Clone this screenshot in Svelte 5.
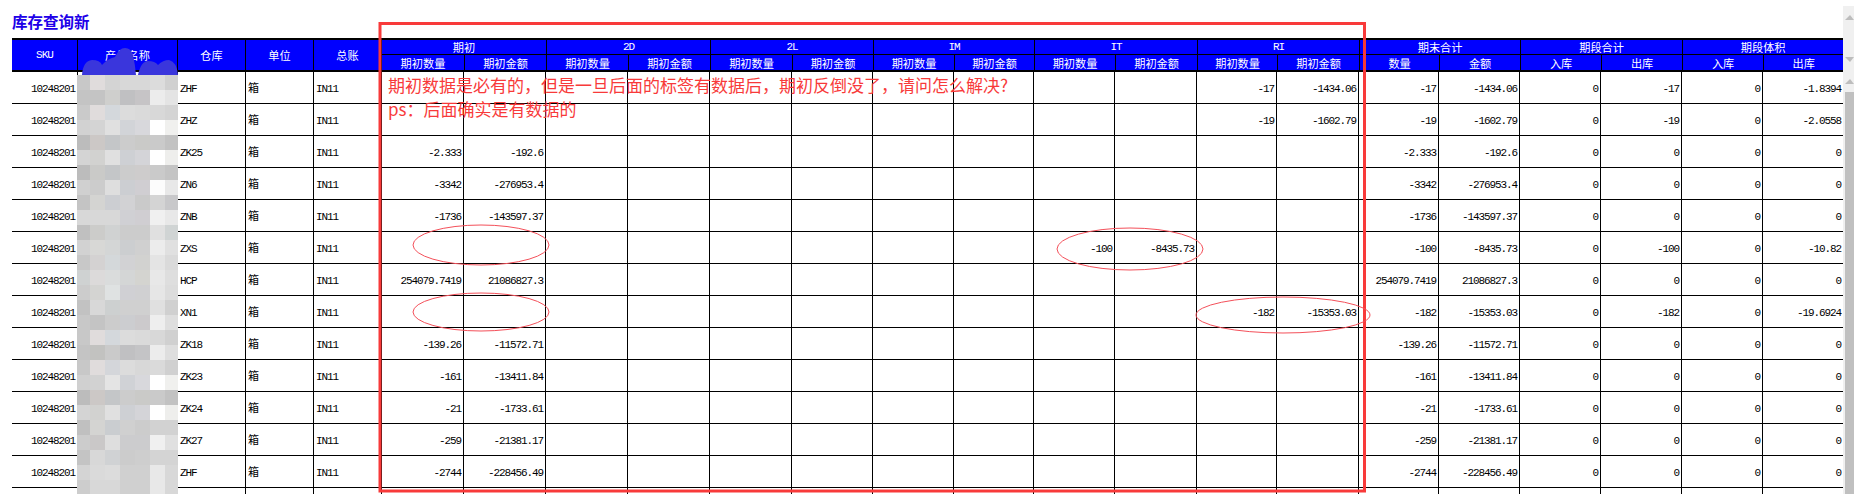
<script>
  // right edge of every column, measured off the body grid lines
  const edges = [12, 78, 178, 246, 314, 382, 464, 546, 628, 710, 792, 873, 954, 1034, 1115, 1197, 1277, 1359, 1439, 1520, 1601, 1682, 1763, 1843];
  const widths = edges.slice(1).map((e, i) => e - edges[i]);
  // the frozen header sits about a pixel to the right of the body from 期初 on
  const headWidths = widths.map((w, i) => (i === 5 ? w + 1 : i === 22 ? w - 1 : w));

  const groups = [
    { label: '期初', subs: ['期初数量', '期初金额'], latin: false },
    { label: '2D', subs: ['期初数量', '期初金额'], latin: true },
    { label: '2L', subs: ['期初数量', '期初金额'], latin: true },
    { label: 'IM', subs: ['期初数量', '期初金额'], latin: true },
    { label: 'IT', subs: ['期初数量', '期初金额'], latin: true },
    { label: 'RI', subs: ['期初数量', '期初金额'], latin: true },
    { label: '期末合计', subs: ['数量', '金额'], latin: false },
    { label: '期段合计', subs: ['入库', '出库'], latin: false },
    { label: '期段体积', subs: ['入库', '出库'], latin: false }
  ];

  function row(wh, slot, qty, amt, out = 0, vol = 0) {
    const cells = Array(12).fill('');
    if (qty !== '') {
      cells[slot * 2] = qty;
      cells[slot * 2 + 1] = amt;
    }
    return { wh, sku: '10248201', unit: '箱', acct: 'IN11', cells: [...cells, qty, amt, 0, out, 0, vol] };
  }

  const rows = [
    row('ZHF', 5, -17, '-1434.06', -17, -1.8394),
    row('ZHZ', 5, -19, '-1602.79', -19, -2.0558),
    row('ZK25', 0, -2.333, '-192.6'),
    row('ZN6', 0, -3342, '-276953.4'),
    row('ZNB', 0, -1736, '-143597.37'),
    row('ZXS', 4, -100, '-8435.73', -100, -10.82),
    row('HCP', 0, '254079.7419', '21086827.3'),
    row('XN1', 5, -182, '-15353.03', -182, -19.6924),
    row('ZK18', 0, -139.26, '-11572.71'),
    row('ZK23', 0, -161, '-13411.84'),
    row('ZK24', 0, -21, '-1733.61'),
    row('ZK27', 0, -259, '-21381.17'),
    row('ZHF', 0, -2744, '-228456.49'),
    // only the top of this row is on screen, its text falls below the fold
    { wh: '', sku: '', unit: '', acct: '', cells: Array(18).fill('') }
  ];

  // mosaic over the product names, one line per 15px band
  const mosaic = [
    'c8c8c8 e0dcdc d4d4d4 d8d8d8 d8d8d8 dcdcdc d0d0d0',
    'c4c4c4 c4c4c4 cfcfcd c0c0c2 c6c4c6 ececec e4e4e4',
    'cacaca e0dcdc d4d8dc dcdcdc dadada d8d8d8 d4d4d4',
    'd2d2d2 d4d4d4 e0e0e0 d2d4d8 d8d8dc ffffff f0f0ee',
    'bcbcbc ccc8c6 c4c6c8 cccccc cacac8 cacaca c2c2c2',
    'd4d4d4 d2d2d0 e0e0e0 ced0d4 d4d4d8 ffffff eeeeec',
    'bcbcbc cacac8 c4c6c8 cccccc cecccc cacaca c4c4c4',
    'd0d0d0 cccccc dedede ccced2 d0ced2 fcfcfc e8e8e8',
    'c4c4c4 d4d4d2 ccced2 d2d2d4 cacaca d4d4d4 c8c8ca',
    'd8d8d8 d8d8d8 d8d8d8 d0d0d4 d0ced2 f0f0f0 e8e8e8',
    'c0c0c0 ccccca d0d2d2 cccccc cccccc e0e0e0 d0d4d4',
    'd2d2d2 d8d8d6 d4d6d6 ccced0 d0d0d0 ececec e0e0e0',
    'c8c8c8 d4d2d2 d4d8da d2d2d4 d2d2d0 e4e4e4 dadada',
    'cfd2d2 dcdada dadcdc d4d6d6 d4d4d0 e8e8e8 dedede',
    'cccccc d4d4d2 dfe2e2 d0d0d4 d0d0d2 e6e6e6 dcdcdc',
    'c2c2c2 d8d8d8 cdd0d0 d0d0d0 d0d0d0 e0e0e0 d0d0d0',
    'c8c8c8 c4c4c4 cccccc cccdd0 cccacc eeeeee dedede',
    'c8c8c8 e0dcdc d4d8dc dcdcdc dadada d8d8d8 d0d0d0',
    'c4c4c4 c2c2c0 cacaca c0c0c2 c4c4c6 ececec dedede',
    'c8c8c8 e0dcdc d4d6da dcdcdc d8d8d8 dadada d0d0d0',
    'd0d0d0 d2d2d2 e4e4e4 d0d2d6 d8d8dc ffffff f0f0ee',
    'bcbcbc ccc8c6 c4c6c8 cccccc cacac8 cacaca c2c2c2',
    'd4d4d4 d2d2d0 e0e0e0 ced0d4 d4d4d8 ffffff eeeeec',
    'c0c0c0 d4d4d2 cacdd0 d0d0d0 cccccc d2d2d2 d2d2d2',
    'cccccc cac8c8 dedede ccccce ccccce f0f0f0 e0e0e0',
    'c4c4c4 d8d8d8 d0d2d4 cccccc cecece d4d4d4 d4d4d4',
    'd4d4d4 dadada dcdcdc d0d0d0 d0d0d0 e8e8e8 d8d8d8',
    'cdcdcd d8d8d8 d8d8d8 d0d0d0 d0d0d0 e8e8e8 d8d8d8'
  ].flatMap((line) => line.split(' '));

  const ellipses = [
    { cx: 481, cy: 245, rx: 68, ry: 20 },
    { cx: 481, cy: 312, rx: 68, ry: 19 },
    { cx: 1130, cy: 249, rx: 73, ry: 21 },
    { cx: 1283, cy: 315, rx: 87, ry: 18 }
  ];
</script>

<div class="page">
  <main class="main">
    <h1 class="title">库存查询新</h1>

    <table class="head">
      <colgroup>
        {#each headWidths as w}<col style="width: {w}px" />{/each}
      </colgroup>
      <thead>
        <tr class="top">
          <th rowspan="2" class="latin">SKU</th>
          <th rowspan="2">产品名称</th>
          <th rowspan="2">仓库</th>
          <th rowspan="2">单位</th>
          <th rowspan="2">总账</th>
          {#each groups as g}
            <th colspan="2" class:latin={g.latin}>{g.label}</th>
          {/each}
        </tr>
        <tr class="sub">
          {#each groups as g}
            {#each g.subs as s}<th>{s}</th>{/each}
          {/each}
        </tr>
      </thead>
    </table>

    <table class="body">
      <colgroup>
        {#each widths as w}<col style="width: {w}px" />{/each}
      </colgroup>
      <tbody>
        {#each rows as r}
          <tr>
            <td class="num">{r.sku}</td>
            <td></td>
            <td>{r.wh}</td>
            <td>{r.unit}</td>
            <td>{r.acct}</td>
            {#each r.cells as c}<td class="num">{c}</td>{/each}
          </tr>
        {/each}
      </tbody>
    </table>

    <svg class="humps" width="102" height="28" viewBox="0 -13 102 28">
      <path d="M5 15 Q6 1 15 0 Q23 0 25 5 Q30 -1 38 -3 Q42 -12 48 -12 Q54 -12 56 -5 Q58 4 59 15 L61 15 Q64 1 71 1 Q78 1 81 5 Q86 0 92 0 Q100 2 101 15 Z" />
    </svg>

    <div class="mosaic">
      {#each mosaic as c}<i style="background: #{c}"></i>{/each}
    </div>

    <svg class="marks" width="1843" height="494">
      <rect x="380" y="23.5" width="984.5" height="467.5" />
      {#each ellipses as e}
        <ellipse cx={e.cx} cy={e.cy} rx={e.rx} ry={e.ry} />
      {/each}
    </svg>

    <p class="note">期初数据是必有的，但是一旦后面的标签有数据后，期初反倒没了，请问怎么解决?<br />ps：后面确实是有数据的</p>
  </main>

  <aside class="scroll">
    <span class="arrow up"></span>
    <span class="arrow down"></span>
    <span class="arrow up second"></span>
    <div class="thumb"></div>
  </aside>
</div>

<style>
  :global(body) {
    margin: 0;
    background: #fff;
  }

  .page {
    display: flex;
    height: 494px;
    overflow: hidden;
    font-family: "Noto Sans CJK SC", sans-serif;
  }

  .main {
    position: relative;
    width: 1843px;
    padding-left: 12px;
    box-sizing: border-box;
    overflow: hidden;
  }

  .title {
    height: 38px;
    margin: 0;
    padding-top: 11px;
    box-sizing: border-box;
    font-size: 15.5px;
    line-height: 20px;
    font-weight: 700;
    color: #2000e8;
  }

  table {
    table-layout: fixed;
    width: 1831px;
    border-collapse: separate;
    border-spacing: 0;
  }

  .head th {
    padding: 0;
    background: #0000ff;
    color: #fff;
    font-size: 11.2px;
    font-weight: 400;
    line-height: 14px;
    border-right: 1px solid #000;
    border-bottom: 1px solid #000;
    border-top: 0;
  }

  .head th:last-child {
    border-right: 0;
  }

  .head .top th {
    height: 14px;
    border-top: 2px solid #000;
  }

  .head .top th[rowspan] {
    border-bottom: 2px solid #000;
  }

  .head .sub th {
    height: 15px;
    border-bottom: 2px solid #000;
  }

  .head th.latin {
    font-family: "Liberation Mono", monospace;
    font-size: 11px;
    letter-spacing: -1px;
  }

  .body td {
    height: 31px;
    padding: 2px 0 0 2px;
    box-sizing: border-box;
    border-right: 1px solid #000;
    border-bottom: 1px solid #000;
    font-family: "Liberation Mono", "Noto Sans CJK SC", monospace;
    font-size: 11px;
    line-height: 14px;
    letter-spacing: -1.1px;
    color: #000;
    white-space: nowrap;
  }

  .body tr {
    height: 32px;
  }

  .body td {
    height: 32px;
  }

  .body td:last-child {
    border-right: 0;
  }

  .body td.num {
    padding: 2px 2px 0 0;
    text-align: right;
  }

  .humps {
    position: absolute;
    left: 77px;
    top: 47px;
    overflow: visible;
  }

  .humps path {
    fill: #3a36dc;
  }

  .mosaic {
    position: absolute;
    left: 77px;
    top: 75px;
    display: grid;
    grid-template-columns: 13px repeat(5, 15px) 13px;
    grid-auto-rows: 15px;
  }

  .mosaic i {
    display: block;
  }

  .marks {
    position: absolute;
    left: 0;
    top: 0;
    pointer-events: none;
  }

  .marks rect {
    fill: none;
    stroke: #f83a3a;
    stroke-width: 3;
  }

  .marks ellipse {
    fill: none;
    stroke: #f4505a;
    stroke-width: 1;
  }

  .note {
    position: absolute;
    left: 388px;
    top: 73px;
    margin: 0;
    font-size: 17px;
    line-height: 24px;
    color: #f83a3a;
    white-space: nowrap;
  }

  .scroll {
    position: relative;
    width: 11px;
    margin-top: 6px;
    background: #f0f0f0;
  }

  .thumb {
    position: absolute;
    left: 2px;
    right: 0;
    top: 86px;
    bottom: 0;
    background: #c0c0c0;
  }

  .arrow {
    position: absolute;
    left: 2px;
    border-left: 5px solid transparent;
    border-right: 4px solid transparent;
  }

  .arrow.up {
    top: 9px;
    border-bottom: 5px solid #bdbdbd;
  }

  .arrow.down {
    top: 51px;
    border-top: 5px solid #bdbdbd;
  }

  .arrow.second {
    top: 73px;
  }
</style>
